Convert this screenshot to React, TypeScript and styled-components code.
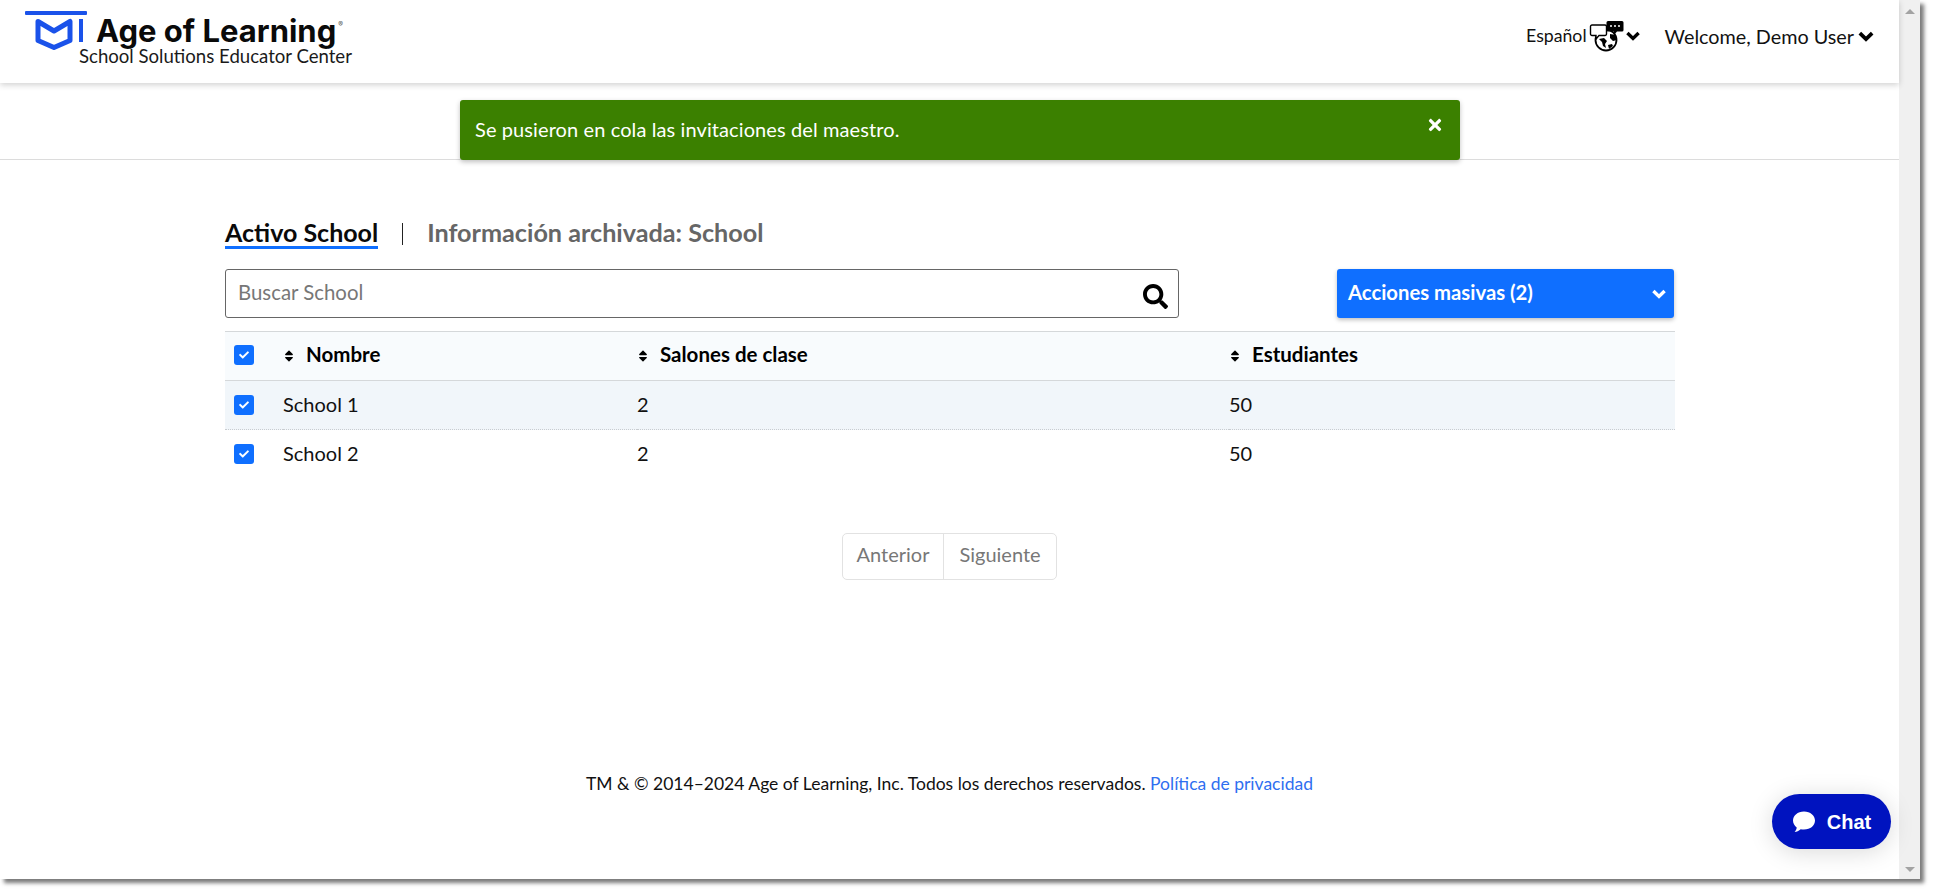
import React from "react";
import styled, { createGlobalStyle } from "styled-components";
import { FaSearch, FaTimes, FaCheck, FaSort } from "react-icons/fa";

const Global = createGlobalStyle`
  html, body { margin: 0; padding: 0; background: #fff; overflow: hidden; }
  body { font-family: Lato, "Liberation Sans", sans-serif; color: #111; }
  * { box-sizing: border-box; }
`;
const Page = styled.div`width: 1935px; height: 894px; background: #fff;`;
const Window = styled.div`
  position: relative; width: 1920px; height: 879px; display: flex; background: #fff;
  box-shadow: 4px 4px 4px #7a7a7a;
`;
const Main = styled.div`width: 1899px; display: flex; flex-direction: column;`;
const Scrollbar = styled.div`
  width: 21px; background: #f0f0f0; display: flex; flex-direction: column;
  justify-content: space-between; align-items: center; padding: 9px 0 7px;
`;
const Arrow = styled.span<{ $down?: boolean }>`
  width: 0; height: 0; border-left: 5px solid transparent; border-right: 5px solid transparent;
  ${p => p.$down ? "border-top: 5px solid #a3a3a3;" : "border-bottom: 5px solid #a3a3a3;"}
`;
const Header = styled.header`
  position: relative; z-index: 2; height: 83px; flex: none; display: flex; align-items: flex-start;
  justify-content: space-between; background: #fff; box-shadow: 0 2px 6px rgba(0,0,0,.18);
`;
const Brand = styled.div`display: flex; align-items: flex-start; padding: 11px 0 0 25px;`;
const LogoSvg = styled.svg`width: 62px; height: 40px; flex: none;`;
const BrandText = styled.div`margin-left: -8px; display: flex; flex-direction: column;`;
const BrandName = styled.div`
  font: 700 31px/30px Inter, sans-serif; color: #0a0a0a; letter-spacing: 0; margin: 5px 0 0 17px; white-space: nowrap;
  sup { font-size: 7px; font-weight: 400; vertical-align: 15px; line-height: 0; margin-left: 2px; color: #555; }
`;
const BrandSub = styled.div`font: 400 18.6px/20px Lato, sans-serif; color: #1a1a1a; white-space: nowrap;`;
const HeaderRight = styled.div`display: flex; align-items: center; height: 72px; padding-right: 25px;`;
const Lang = styled.span`font-size: 17.7px; color: #111; margin-top: -2px;`;
const Globe = styled.svg`width: 36px; height: 32px; margin: 0 0 0 2px;`;
const Chevron = styled.svg<{ $w: number }>`
  width: ${p => p.$w}px; height: ${p => Math.round(p.$w * 0.7)}px; flex: none;
  fill: none; stroke: currentColor; stroke-width: 3.4; stroke-linecap: butt;
`;
const LangChevron = styled.span`display: inline-flex; margin-left: 1px; color: #000;`;
const Welcome = styled.span`font-size: 19.8px; color: #111; margin-left: 25px; margin-right: 4px; white-space: nowrap;`;
const WelcomeChevron = styled.span`display: inline-flex; color: #000;`;
const AlertBand = styled.div`
  height: 77px; flex: none; border-bottom: 1px solid #dcdcdc; display: flex; padding: 17px 0 0 460px;
`;
const Alert = styled.div`
  width: 1000px; height: 60px; background: #3b8000; color: #fff; border-radius: 3px; font-size: 20px; letter-spacing: .1px;
  display: flex; align-items: center; justify-content: space-between; padding: 0 16px 2px 15px;
  box-shadow: 0 2px 5px rgba(0,0,0,.25);
  svg { font-size: 18px; margin-top: -8px; }
`;
const Content = styled.div`width: 1450px; margin-left: 225px; display: flex; flex-direction: column;`;
const Tabs = styled.div`display: flex; align-items: flex-start; margin-top: 61px; height: 48px;`;
const Tab = styled.div<{ $active?: boolean }>`
  font-size: ${p => p.$active ? 25 : 25.2}px; font-weight: 700; line-height: 22px; white-space: nowrap;
  color: ${p => p.$active ? "#0a0a0a" : "#666"};
  ${p => p.$active ? "border-bottom: 3px solid #0f6fff; height: 28px;" : ""}
`;
const TabDivider = styled.span`width: 1px; height: 22px; background: #222; margin: 2px 24px 0 24px;`;
const Toolbar = styled.div`display: flex; justify-content: space-between; height: 49px;`;
const Search = styled.div`
  width: 954px; height: 49px; border: 1px solid #666; border-radius: 3px; display: flex; align-items: center;
  justify-content: space-between; padding: 0 10px 0 12px; color: #000;
  svg { font-size: 25px; margin-top: 5px; }
`;
const Placeholder = styled.span`font-size: 20.4px; color: #777; margin-top: -4px;`;
const Bulk = styled.div`
  width: 337px; height: 49px; margin-right: 1px; background: #0f6fff; border-radius: 3px; color: #fff; font-size: 20.3px; font-weight: 700;
  display: flex; align-items: center; justify-content: space-between; padding: 0 8px 4px 11px;
  box-shadow: 0 2px 4px rgba(0,0,0,.25);
  svg { margin-top: 4px; }
`;
const Table = styled.table`
  width: 1450px; margin-top: 13px; border-collapse: collapse; table-layout: fixed; font-size: 20px; color: #111;
`;
const Head = styled.tr`height: 49px; background: #f8fbfd; border-top: 1px solid #d5d8da; border-bottom: 1px solid #d5d8da;`;
const Row = styled.tr<{ $shade?: boolean }>`
  height: 49px; background: ${p => p.$shade ? "#f1f6fa" : "#fff"};
  border-bottom: ${p => p.$shade ? "1px dotted #c8ccd0" : "none"};
`;
const Th = styled.th<{ $w: number }>`
  width: ${p => p.$w}px; text-align: left; font-weight: 700; font-size: 20.5px; color: #000; padding: 0 0 4px;
`;
const Td = styled.td`padding: 0 0 2px;`;
const Check = styled.span`
  width: 20px; height: 20px; margin: 2px 0 0 9px; background: #0f6fff; border-radius: 3px; color: #fff;
  display: flex; align-items: center; justify-content: center; font-size: 10px;
`;
const Sort = styled.span`display: inline-flex; align-items: center; font-size: 14px; vertical-align: -1px; margin-left: -1px;`;
const SortLabel = styled.span<{ $gap: number }>`margin-left: ${p => p.$gap}px;`;
const Pager = styled.div`
  align-self: center; margin: 54px 0 0 -1px; display: flex; height: 47px; width: 215px; border: 1px solid #e2e2e2; border-radius: 5px; color: #777; font-size: 20px;
`;
const PagerItem = styled.div<{ $w: number }>`
  width: ${p => p.$w}px; display: flex; align-items: center; justify-content: center; padding-bottom: 4px;
  & + & { border-left: 1px solid #e2e2e2; }
`;
const Footer = styled.footer`text-align: center; font-size: 17.5px; color: #111; margin-top: 193px;`;
const FooterLink = styled.a`color: #2f6ff0; text-decoration: none;`;
const ChatButton = styled.div`
  position: absolute; left: 1772px; top: 794px; width: 119px; height: 55px; border-radius: 28px; background: #0013bf; color: #fff;
  display: flex; align-items: center; justify-content: center; gap: 11px; padding-top: 1px;
  font: 700 20px "Liberation Sans", Arial, sans-serif; box-shadow: 0 3px 24px rgba(0,0,0,.15);
`;

const ChevronIcon = ({ w }: { w: number }) => (
  <Chevron $w={w} viewBox="0 0 14 10" aria-hidden><path d="M1.4 2 L7 7.4 L12.6 2" /></Chevron>
);

export default function App() {
  return (
    <Page>
      <Global />
      <Window>
        <Main>
          <Header>
            <Brand>
              <LogoSvg viewBox="0 0 62 40" aria-hidden>
                <rect x="0" y="0" width="62" height="4" rx="1" fill="#1a52ea" />
                <path d="M13 10.5 L29 20 L45 10.5 V29.5 L29 36.5 L13 29.5 Z" fill="none" stroke="#1a52ea" strokeWidth="5" strokeLinejoin="round" />
                <rect x="54" y="8" width="4" height="23" fill="#1a52ea" />
              </LogoSvg>
              <BrandText>
                <BrandName>Age of Learning<sup>®</sup></BrandName>
                <BrandSub>School Solutions Educator Center</BrandSub>
              </BrandText>
            </Brand>
            <HeaderRight>
              <Lang>Español</Lang>
              <Globe viewBox="0 0 36 32" aria-hidden>
                <circle cx="17" cy="20" r="10.5" fill="#fff" stroke="#000" strokeWidth="1.8" />
                <path d="M10 19 l5 -1 l3 3 l-2 3 l1 4 l-3 -2 l-1 -4 z M21 14 l6 1 l1 5 l-4 1 l-3 -3 z M19 25 l4 -1 l1 2 l-4 3 z" fill="#000" />
                <path d="M3 5 H16 a1.5 1.5 0 0 1 1.5 1.5 V14 a1.5 1.5 0 0 1 -1.5 1.5 H10 L7 19 V15.5 H3 a1.5 1.5 0 0 1 -1.5 -1.5 V6.5 A1.5 1.5 0 0 1 3 5 Z" fill="#fff" stroke="#000" strokeWidth="1.4" />
                <path d="M19 1 H33 a1.5 1.5 0 0 1 1.5 1.5 V10 a1.5 1.5 0 0 1 -1.5 1.5 H28 L25 15 V11.5 H19 a1.5 1.5 0 0 1 -1.5 -1.5 V2.5 A1.5 1.5 0 0 1 19 1 Z" fill="#000" />
                <circle cx="22" cy="6" r="1" fill="#fff" /><circle cx="26" cy="6" r="1" fill="#fff" /><circle cx="30" cy="6" r="1" fill="#fff" />
              </Globe>
              <LangChevron><ChevronIcon w={14} /></LangChevron>
              <Welcome>Welcome, Demo User</Welcome>
              <WelcomeChevron><ChevronIcon w={16} /></WelcomeChevron>
            </HeaderRight>
          </Header>
          <AlertBand>
            <Alert>
              <span>Se pusieron en cola las invitaciones del maestro.</span>
              <FaTimes />
            </Alert>
          </AlertBand>
          <Content>
            <Tabs>
              <Tab $active>Activo School</Tab>
              <TabDivider />
              <Tab>Información archivada: School</Tab>
            </Tabs>
            <Toolbar>
              <Search>
                <Placeholder>Buscar School</Placeholder>
                <FaSearch />
              </Search>
              <Bulk>
                <span>Acciones masivas (2)</span>
                <ChevronIcon w={14} />
              </Bulk>
            </Toolbar>
            <Table>
              <thead>
                <Head>
                  <Th $w={58}><Check><FaCheck /></Check></Th>
                  <Th $w={354}><Sort><FaSort /></Sort><SortLabel $gap={10}>Nombre</SortLabel></Th>
                  <Th $w={592}><Sort><FaSort /></Sort><SortLabel $gap={10}>Salones de clase</SortLabel></Th>
                  <Th $w={446}><Sort><FaSort /></Sort><SortLabel $gap={10}>Estudiantes</SortLabel></Th>
                </Head>
              </thead>
              <tbody>
                <Row $shade>
                  <Td><Check><FaCheck /></Check></Td><Td>School 1</Td><Td>2</Td><Td>50</Td>
                </Row>
                <Row>
                  <Td><Check><FaCheck /></Check></Td><Td>School 2</Td><Td>2</Td><Td>50</Td>
                </Row>
              </tbody>
            </Table>
            <Pager>
              <PagerItem $w={101}>Anterior</PagerItem>
              <PagerItem $w={114}>Siguiente</PagerItem>
            </Pager>
          </Content>
          <Footer>
            TM &amp; © 2014–2024 Age of Learning, Inc. Todos los derechos reservados. <FooterLink href="#">Política de privacidad</FooterLink>
          </Footer>
        </Main>
        <Scrollbar><Arrow /><Arrow $down /></Scrollbar>
        <ChatButton>
          <svg width="24" height="24" viewBox="0 0 24 24" aria-hidden>
            <path d="M12 1.5 C18.4 1.5 23 5.6 23 10.6 C23 15.6 18.4 19.6 12 19.6 C10.8 19.6 9.7 19.5 8.7 19.2 C7 20.8 4.6 21.9 2.6 21.9 C3.8 20.6 4.6 19 4.7 17.4 C2.4 15.8 1 13.4 1 10.6 C1 5.6 5.6 1.5 12 1.5 Z" fill="#fff" />
          </svg>
          <span>Chat</span>
        </ChatButton>
      </Window>
    </Page>
  );
}
